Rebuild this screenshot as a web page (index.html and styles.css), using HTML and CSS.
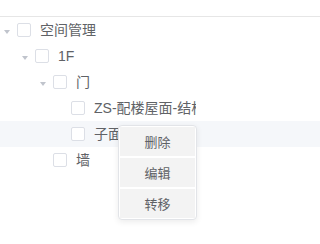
FILE: index.html
```html
<!DOCTYPE html>
<html lang="zh">
<head>
<meta charset="utf-8">
<link rel="stylesheet" href="styles.css">
</head>
<body>
<div class="topbar"></div>
<div class="tree">
  <div class="row lv0"><span class="caret"></span><span class="box"></span><span class="label">空间管理</span></div>
  <div class="row lv1"><span class="caret"></span><span class="box"></span><span class="label">1F</span></div>
  <div class="row lv2"><span class="caret"></span><span class="box"></span><span class="label">门</span></div>
  <div class="row lv3"><span class="caret leaf"></span><span class="box"></span><span class="label clip">ZS-配楼屋面-结构</span></div>
  <div class="row lv3 hover"><span class="caret leaf"></span><span class="box"></span><span class="label">子面</span></div>
  <div class="row lv2"><span class="caret leaf"></span><span class="box"></span><span class="label">墙</span></div>
</div>
<div class="menu">
  <div class="item">删除</div>
  <div class="item">编辑</div>
  <div class="item">转移</div>
</div>
</body>
</html>
```
FILE: styles.css
```css
html, body {
  margin: 0;
  padding: 0;
  background: #ffffff;
  font-family: "Liberation Sans", "Noto Sans CJK SC", sans-serif;
  color: #606266;
}
.topbar {
  height: 16px;
  border-bottom: 1px solid #e6e6e6;
  background: #ffffff;
}
.tree {
  display: flex;
  flex-direction: column;
}
.row {
  display: flex;
  align-items: center;
  height: 26px;
  font-size: 14px;
  white-space: nowrap;
}
.row.hover { background: #f5f7fa; }
.lv0 { padding-left: 4px; }
.lv1 { padding-left: 22px; }
.lv2 { padding-left: 40px; }
.lv3 { padding-left: 58px; }
.caret {
  width: 0;
  height: 0;
  border-left: 3px solid transparent;
  border-right: 3px solid transparent;
  border-top: 4px solid #c0c4cc;
  margin-top: 3px;
  margin-right: 7px;
}
.caret.leaf { border-top-color: transparent; }
.box {
  box-sizing: border-box;
  width: 14px;
  height: 14px;
  border: 1px solid #dcdfe6;
  border-radius: 2px;
  background: #ffffff;
  margin-right: 9px;
  flex: none;
}
.label { line-height: 26px; }
.label.clip {
  max-width: 102px;
  overflow: hidden;
}
.menu {
  position: absolute;
  left: 118px;
  top: 125px;
  width: 79px;
  box-sizing: border-box;
  padding: 1px;
  background: #ffffff;
  border: 1px solid #e2e4e8;
  border-radius: 4px;
  box-shadow: 0 2px 6px rgba(0, 0, 0, 0.08);
  display: flex;
  flex-direction: column;
  gap: 2px;
}
.item {
  height: 29px;
  display: flex;
  align-items: center;
  justify-content: center;
  background: #f3f3f3;
  font-size: 13px;
  color: #606266;
}
```
